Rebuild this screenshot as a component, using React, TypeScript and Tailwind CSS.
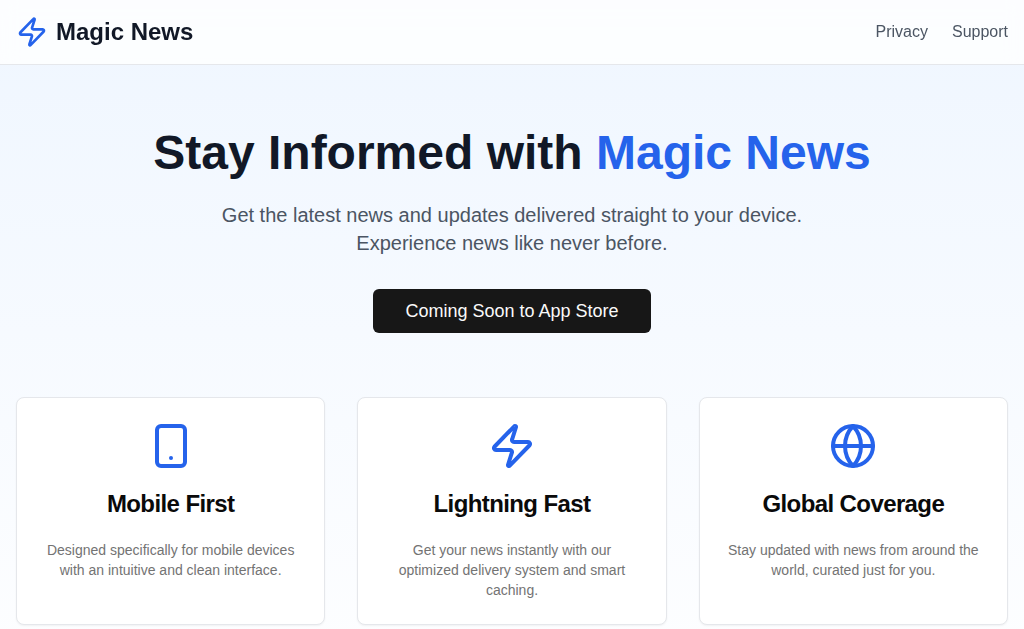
import { Globe, Smartphone, Zap } from "lucide-react";
import type { LucideIcon } from "lucide-react";

interface Feature {
  icon: LucideIcon;
  title: string;
  description: string;
}

const features: Feature[] = [
  {
    icon: Smartphone,
    title: "Mobile First",
    description:
      "Designed specifically for mobile devices with an intuitive and clean interface.",
  },
  {
    icon: Zap,
    title: "Lightning Fast",
    description:
      "Get your news instantly with our optimized delivery system and smart caching.",
  },
  {
    icon: Globe,
    title: "Global Coverage",
    description:
      "Stay updated with news from around the world, curated just for you.",
  },
];

function Header() {
  return (
    <header className="border-b border-[#e5e7eb] bg-white/80 backdrop-blur-sm">
      <div className="container mx-auto flex items-center justify-between px-4 py-4">
        <div className="flex items-center gap-2">
          <Zap className="h-8 w-8 text-[#2563eb]" />
          <span className="text-2xl font-bold text-[#111827]">Magic News</span>
        </div>
        <nav className="flex items-center gap-6">
          <a href="/privacy" className="text-[#4b5563] hover:text-[#111827]">
            Privacy
          </a>
          <a href="/support" className="text-[#4b5563] hover:text-[#111827]">
            Support
          </a>
        </nav>
      </div>
    </header>
  );
}

function FeatureCard({ icon: Icon, title, description }: Feature) {
  return (
    <div className="rounded-lg border border-[#e5e7eb] bg-white text-center shadow-xs">
      <div className="flex flex-col gap-1.5 p-6">
        <Icon className="mx-auto mb-4 h-12 w-12 text-[#2563eb]" />
        <h3 className="text-2xl leading-none font-semibold tracking-tight text-neutral-950">
          {title}
        </h3>
      </div>
      <div className="p-6 pt-0">
        <p className="text-sm text-[#737373]">{description}</p>
      </div>
    </div>
  );
}

export default function App() {
  return (
    <div className="min-h-screen bg-linear-to-b/srgb from-[#eff6ff] to-white pb-16 font-['Liberation_Sans',sans-serif]">
      <Header />
      <main className="container mx-auto px-4 py-16">
        <div className="mb-16 text-center">
          <h1 className="mb-6 text-5xl font-bold text-[#111827]">
            Stay Informed with <span className="text-[#2563eb]">Magic News</span>
          </h1>
          <p className="mx-auto mb-8 max-w-2xl text-xl text-[#4b5563]">
            Get the latest news and updates delivered straight to your device.
            Experience news like never before.
          </p>
          <button
            type="button"
            className="h-11 rounded-md bg-neutral-900 px-8 text-lg text-neutral-50 hover:bg-neutral-800"
          >
            Coming Soon to App Store
          </button>
        </div>
        <div className="grid gap-8 md:grid-cols-3">
          {features.map((feature) => (
            <FeatureCard key={feature.title} {...feature} />
          ))}
        </div>
      </main>
    </div>
  );
}
